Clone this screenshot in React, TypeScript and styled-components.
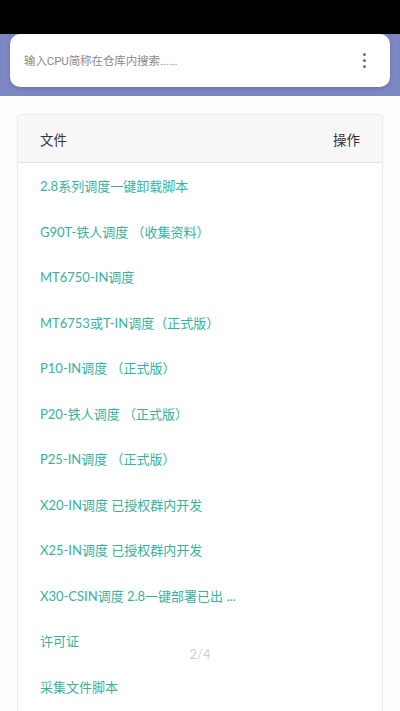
import React from "react";
import styled, { createGlobalStyle } from "styled-components";

const Global = createGlobalStyle`
  html, body { margin: 0; padding: 0; background: #fdfdfd; }
  body { font-family: Lato, "Noto Sans CJK SC", sans-serif; overflow: hidden; }
  * { box-sizing: border-box; }
`;

const Page = styled.div`
  width: 400px;
  height: 711px;
  position: relative;
  overflow: hidden;
  background: #fdfdfd;
`;

const StatusBar = styled.div`
  height: 34px;
  background: #000;
`;

const SearchBand = styled.div`
  height: 62px;
  background: #7c86c1;
  padding: 0 10px;
`;

const SearchCard = styled.div`
  height: 53px;
  background: #fff;
  border-radius: 10px;
  box-shadow: 0 2px 4px rgba(0, 0, 0, 0.12);
  display: flex;
  align-items: center;
  padding: 0 24px 0 14px;
`;

const SearchInput = styled.input`
  flex: 1;
  border: none;
  outline: none;
  background: transparent;
  font-family: Roboto, "Noto Sans CJK SC", sans-serif;
  font-size: 11.5px;
  color: #333;
  padding: 0;
  letter-spacing: -0.1px;
  &::placeholder { color: #8a8a8a; }
`;

const MenuDots = styled.div`
  display: flex;
  flex-direction: column;
  gap: 2.5px;
  align-items: center;
`;

const Dot = styled.span`
  width: 3.5px;
  height: 3.5px;
  border-radius: 50%;
  background: #707070;
`;

const Content = styled.div`
  padding: 18px 17px 0 17px;
`;

const Table = styled.div`
  border: 1px solid #ececec;
  border-radius: 4px;
  background: #fff;
  box-shadow: 0 1px 3px rgba(0, 0, 0, 0.04);
  padding-bottom: 40px;
`;

const HeaderRow = styled.div`
  height: 48px;
  background: #f7f7f7;
  border-bottom: 1px solid #e3e3e3;
  display: flex;
  align-items: center;
  justify-content: space-between;
  padding: 0 22px 0 22px;
  font-size: 13.5px;
  color: #333;
  border-radius: 4px 4px 0 0;
`;

const Row = styled.div`
  height: 45.5px;
  display: flex;
  align-items: center;
  padding: 0 22px;
  font-size: 13px;
  color: #37b29d;
  white-space: nowrap;
`;

const Pager = styled.div`
  position: absolute;
  left: 0;
  right: 0;
  top: 646px;
  text-align: center;
  font-size: 13px;
  color: #cfcfcf;
  pointer-events: none;
`;

const files = [
  "2.8系列调度一键卸载脚本",
  "G90T-铁人调度 （收集资料）",
  "MT6750-IN调度",
  "MT6753或T-IN调度（正式版）",
  "P10-IN调度 （正式版）",
  "P20-铁人调度 （正式版）",
  "P25-IN调度 （正式版）",
  "X20-IN调度 已授权群内开发",
  "X25-IN调度 已授权群内开发",
  "X30-CSIN调度 2.8一键部署已出 ...",
  "许可证",
  "采集文件脚本",
];

export default function App() {
  return (
    <Page>
      <Global />
      <StatusBar />
      <SearchBand>
        <SearchCard>
          <SearchInput placeholder="输入CPU简称在仓库内搜索......" />
          <MenuDots>
            <Dot />
            <Dot />
            <Dot />
          </MenuDots>
        </SearchCard>
      </SearchBand>
      <Content>
        <Table>
          <HeaderRow>
            <span>文件</span>
            <span>操作</span>
          </HeaderRow>
          {files.map((f) => (
            <Row key={f}>{f}</Row>
          ))}
        </Table>
      </Content>
      <Pager>2/4</Pager>
    </Page>
  );
}
